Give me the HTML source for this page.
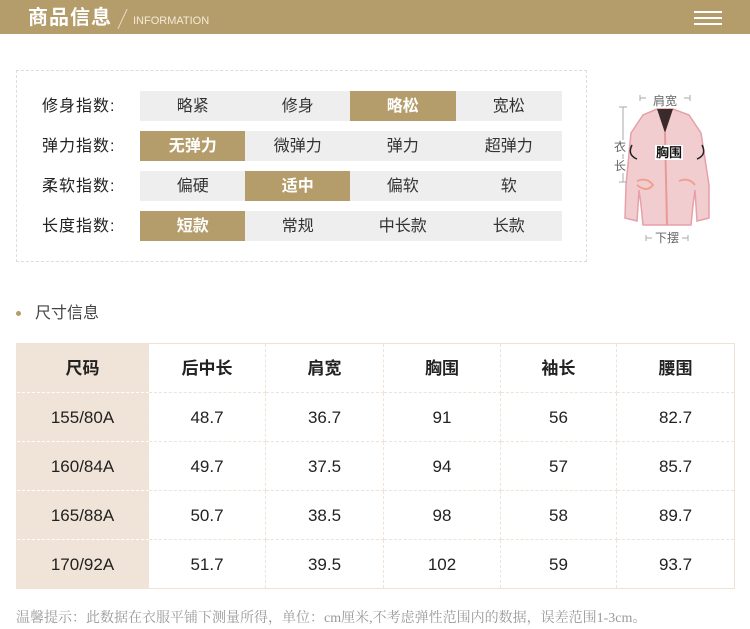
<!DOCTYPE html>
<html><head><meta charset="utf-8"><style>
*{margin:0;padding:0;box-sizing:border-box}
body{width:750px;height:628px;background:#fff;font-family:"Liberation Sans","Noto Sans CJK SC",sans-serif;position:relative;overflow:hidden;color:#222}
.hdr{position:absolute;left:0;top:0;width:750px;height:34px;background:#b59d6b}
.hdr .t{position:absolute;left:28px;top:5px;font-size:20px;line-height:26px;font-weight:bold;color:#fff;letter-spacing:1px}
.hdr .sl{position:absolute;left:122px;top:8px;width:1px;height:22px;background:#e8dcc4;transform:rotate(25deg)}
.hdr .en{position:absolute;left:133px;top:14px;font-size:11px;line-height:14px;color:#f3ead8}
.menu{position:absolute;left:694px;top:11px;width:28px}
.menu i{display:block;height:2px;background:#fff;margin-bottom:4px}
.box{position:absolute;left:16px;top:70px;width:571px;height:192px;border:1px dashed #ddd}
.lab{position:absolute;left:42px;font-size:16px;line-height:30px;height:30px;color:#222;letter-spacing:1px;display:flex;align-items:center;padding-top:2px}
.cell{position:absolute;height:30px;width:105.5px;background:#eee;display:flex;align-items:center;justify-content:center;font-size:16px;line-height:18px;color:#333;padding-top:2px}
.cell.on{background:#b59d6b;color:#fff;font-weight:bold}
.sec{position:absolute;left:16px;top:302px;font-size:16px;line-height:24px;color:#444}
.sec b{display:inline-block;width:5px;height:5px;border-radius:50%;background:#b59d6b;margin-right:14px;vertical-align:middle}
table{position:absolute;left:16px;top:343px;width:718px;border-collapse:collapse;border:1px solid #efe3d6;table-layout:fixed}
td{height:49px;text-align:center;font-size:17px;line-height:20px;color:#222;border:1px dashed #efe3d6;font-weight:normal;padding:2px 0 0}
td:first-child{background:#f0e4d8;border-bottom-color:#fff}
tr:first-child td{font-weight:bold}
.foot{position:absolute;left:16px;top:609px;font-size:14px;line-height:20px;color:#999;font-family:"Liberation Serif","Noto Serif CJK SC",serif}
.fig{position:absolute;left:605px;top:85px;width:120px;height:165px;font-size:12px;color:#666}
.fig span{position:absolute;line-height:14px}
</style></head><body>
<div class="hdr"><div class="t">商品信息</div><div class="sl"></div><div class="en">INFORMATION</div>
<div class="menu"><i></i><i></i><i></i></div></div>
<div class="box"></div>
<div class="lab" style="top:91px">修身指数:</div>
<div class="lab" style="top:131px">弹力指数:</div>
<div class="lab" style="top:171px">柔软指数:</div>
<div class="lab" style="top:211px">长度指数:</div>
<div class="cell" style="left:140px;top:91px">略紧</div><div class="cell" style="left:245px;top:91px">修身</div><div class="cell on" style="left:350px;top:91px">略松</div><div class="cell" style="left:456px;top:91px">宽松</div>
<div class="cell on" style="left:140px;top:131px">无弹力</div><div class="cell" style="left:245px;top:131px">微弹力</div><div class="cell" style="left:350px;top:131px">弹力</div><div class="cell" style="left:456px;top:131px">超弹力</div>
<div class="cell" style="left:140px;top:171px">偏硬</div><div class="cell on" style="left:245px;top:171px">适中</div><div class="cell" style="left:350px;top:171px">偏软</div><div class="cell" style="left:456px;top:171px">软</div>
<div class="cell on" style="left:140px;top:211px">短款</div><div class="cell" style="left:245px;top:211px">常规</div><div class="cell" style="left:350px;top:211px">中长款</div><div class="cell" style="left:456px;top:211px">长款</div>
<div class="fig">
<svg width="120" height="165" viewBox="0 0 120 165" style="position:absolute;left:0;top:0">
<path d="M38 30 L52 24 L68 24 L84 30 L96 48 L104 100 L104 133 L92 136 L90 105 L88 120 L86 140 L38 140 L36 120 L34 105 L32 136 L20 133 L21 100 L26 48 Z" fill="#f2cdd0" stroke="#e6a0a8" stroke-width="1.5"/>
<path d="M52 24 L60 48 L68 24" fill="#3a2a2a"/>
<path d="M60 48 L62 140" stroke="#e89a9a" stroke-width="2"/>
<path d="M32 96 q10 -4 16 4 q-6 8 -16 0 M74 96 q10 -4 16 4" stroke="#f0a090" fill="none" stroke-width="2"/>
<path d="M27 60 Q22 70 32 74 M97 60 Q102 70 92 74" fill="none" stroke="#222" stroke-width="1.5"/>
<path d="M35 10 v6 M35 13 h6 M79 13 h6 M85 10 v6 M18 22 v75 M14 22 h8 M14 97 h8 M41 150 v6 M41 153 h6 M77 153 h6 M83 150 v6" stroke="#aaa" stroke-width="1" fill="none"/>
</svg>
<span style="left:48px;top:9px">肩宽</span>
<span style="left:9px;top:55px;background:#fff">衣</span>
<span style="left:9px;top:74px;background:#fff">长</span>
<span style="left:50px;top:60px;background:#fff;color:#111;font-weight:bold;padding:0 1px;font-size:13px;line-height:15px">胸围</span>
<span style="left:50px;top:146px">下摆</span>
</div>
<div class="sec"><b></b>尺寸信息</div>
<table>
<colgroup><col style="width:132px"><col style="width:117px"><col style="width:118px"><col style="width:117px"><col style="width:116px"><col style="width:118px"></colgroup>
<tr><td>尺码</td><td>后中长</td><td>肩宽</td><td>胸围</td><td>袖长</td><td>腰围</td></tr>
<tr><td>155/80A</td><td>48.7</td><td>36.7</td><td>91</td><td>56</td><td>82.7</td></tr>
<tr><td>160/84A</td><td>49.7</td><td>37.5</td><td>94</td><td>57</td><td>85.7</td></tr>
<tr><td>165/88A</td><td>50.7</td><td>38.5</td><td>98</td><td>58</td><td>89.7</td></tr>
<tr><td>170/92A</td><td>51.7</td><td>39.5</td><td>102</td><td>59</td><td>93.7</td></tr>
</table>
<div class="foot">温馨提示：此数据在衣服平铺下测量所得，单位：cm厘米,不考虑弹性范围内的数据，误差范围1-3cm。</div>
</body></html>
